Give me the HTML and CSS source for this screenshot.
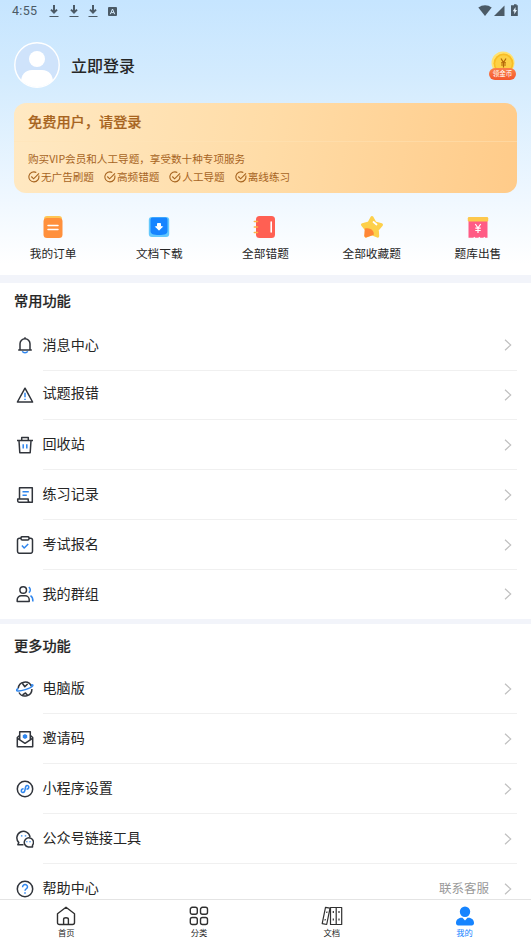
FILE: index.html
```html
<!DOCTYPE html>
<html lang="zh-CN">
<head>
<meta charset="utf-8">
<meta name="viewport" content="width=device-width, initial-scale=1">
<title>我的</title>
<link rel="stylesheet" href="styles.css">
</head>
<body>
<div class="app">
  <main class="content">
  <header class="hero">
    <div class="status">
      <span class="clock">4:55</span>
      <svg class="dl" viewBox="0 0 10 12"><path d="M5 0v7M2 4.600l3 3 3-3" /><path class="thin" d="M.5 11.500h9"/></svg>
      <svg class="dl" viewBox="0 0 10 12"><path d="M5 0v7M2 4.600l3 3 3-3" /><path class="thin" d="M.5 11.500h9"/></svg>
      <svg class="dl" viewBox="0 0 10 12"><path d="M5 0v7M2 4.600l3 3 3-3" /><path class="thin" d="M.5 11.500h9"/></svg>
      <svg class="app-a" viewBox="0 0 9 9"><rect width="9" height="9" rx="1" fill="#4b5a66"/><path d="M2.300 7.200L4.500 2l2.200 5.200M3.200 5.600h2.600" fill="none" stroke="#d5ebfc"/></svg>
      <svg class="signals" viewBox="0 0 42 14"><path d="M.3 3.600C4.200 .3 10 .3 13.700 3.600L7 12z"/><path d="M26.500 1.500v10.500H16z"/><path d="M34.800 1.300h1.200V.2h2.600v1.100h1.200V12h-6.800V1.300z"/><path d="M37.500 3L34.800 7.200h1.500v3L39 6h-1.500z" fill="#e6f3fe"/></svg>
    </div>
    <div class="profile">
      <svg class="avatar" viewBox="0 0 46 46"><defs><clipPath id="face"><circle cx="23" cy="23" r="22"/></clipPath></defs><circle cx="23" cy="23" r="22" fill="#cfe3fb"/><g clip-path="url(#face)" fill="#fff"><circle cx="23" cy="17" r="8"/><path d="M7 40c0-7 4-12 11-12h10c7 0 11 5 11 12v8H7z"/></g><circle cx="23" cy="23" r="22.200" fill="none" stroke="#fff" stroke-width="1.400"/></svg>
      <span class="login">立即登录</span>
      <div class="coin">
        <svg viewBox="0 0 24 22"><circle cx="12" cy="12" r="11.500" fill="#ffe271"/><circle cx="12.500" cy="12.500" r="10" fill="#f8bd25"/><circle cx="12.500" cy="12.500" r="8.300" fill="#fdd044"/><path d="M10 7.500l2.500 4 2.500-4M12.500 11.500v5M10 11.800h5M10 14h5" fill="none" stroke="#b4690a" stroke-width="1.200"/></svg>
        <span class="coin-tag">领金币</span>
      </div>
    </div>
    <section class="vip">
      <h2>免费用户，请登录</h2>
      <div class="vip-info">
        <p>购买VIP会员和人工导题，享受数十种专项服务</p>
        <div class="perks">
          <span class="perk"><svg viewBox="0 0 12 12"><path d="M10.700 4.500A5 5 0 1 1 8.300 1.500"/><path d="M3.300 5.500l2.300 2.300L11 2.300"/></svg>无广告刷题</span>
          <span class="perk"><svg viewBox="0 0 12 12"><path d="M10.700 4.500A5 5 0 1 1 8.300 1.500"/><path d="M3.300 5.500l2.300 2.300L11 2.300"/></svg>高频错题</span>
          <span class="perk"><svg viewBox="0 0 12 12"><path d="M10.700 4.500A5 5 0 1 1 8.300 1.500"/><path d="M3.300 5.500l2.300 2.300L11 2.300"/></svg>人工导题</span>
          <span class="perk"><svg viewBox="0 0 12 12"><path d="M10.700 4.500A5 5 0 1 1 8.300 1.500"/><path d="M3.300 5.500l2.300 2.300L11 2.300"/></svg>离线练习</span>
        </div>
      </div>
    </section>
    <nav class="shortcuts">
      <a><svg viewBox="0 0 24 24"><rect x="3" y="1" width="18" height="10" rx="3" fill="#ffc655"/><rect x="2.500" y="3" width="19" height="20" rx="3.500" fill="#ff903c"/><path d="M7 10.500h10M7 14.500h10" stroke="#fff" stroke-width="1.500" stroke-linecap="round"/></svg>我的订单</a>
      <a><svg viewBox="0 0 24 24"><rect x="1.800" y="2" width="20.400" height="20" rx="3" fill="#63c8fd"/><path d="M5.500 2.500h13a2 2 0 0 1 2 2V16c0 3-3 4-8.500 4s-8.500-1-8.500-4V4.500a2 2 0 0 1 2-2z" fill="#1684ff"/><path d="M10.500 8.500h3v3.200h2L12 15.200l-3.500-3.500h2z" fill="#fff" stroke="#fff" stroke-linejoin="round"/></svg>文档下载</a>
      <a><svg viewBox="0 0 24 24"><rect x="3" y="1" width="19" height="22" rx="3.500" fill="#ff6053"/><path d="M1.300 6.500h3.200M1.300 12h3.200M1.300 17.500h3.200" stroke="#ffb347" stroke-width="1.500" stroke-linecap="round"/><path d="M18.200 7v10" stroke="#fff" stroke-width="1.600" stroke-linecap="round"/></svg>全部错题</a>
      <a><svg viewBox="0 0 24 24"><path d="M12 2.500L15 8l6.500 1.700-4.200 5 .4 6.500L12 18.900l-6 2.300.5-6.500-4-5L9 8z" fill="#fdd04b" stroke="#fdd04b" stroke-width="3" stroke-linejoin="round"/><path d="M4.800 13.600c6.500-1.500 9.500 3 9 6.200L6 22.600q-1.800 0-1.700-2z" fill="#ff8737"/><path d="M13.500 7l3 2.500" stroke="#fff" stroke-width="1.800" stroke-linecap="round"/></svg>全部收藏题</a>
      <a><svg viewBox="0 0 24 24"><path d="M2.500 5h19v17.700h-2.200l-1-1-1 1h-3l-1-1-1 1h-3l-1-1-1 1h-4.800z" fill="#ff5b85"/><rect x="1.800" y="2" width="20.400" height="4.500" rx="1.200" fill="#fdc84d"/><path d="M9.300 9l2.700 4 2.700-4M12 13v5M9.300 13.200h5.400M9.300 15.500h5.400" stroke="#fff" stroke-width="1.200" fill="none"/></svg>题库出售</a>
    </nav>
  </header>

  <section class="group common">
    <h3>常用功能</h3>
    <ul>
      <li><svg class="ico" viewBox="0 0 18 18"><path class="b" d="M6.300 15.200a2.900 2.400 0 0 0 5.400 0"/><path d="M2.200 14h13.600M4 14V7.700a5 5 0 0 1 10 0V14M9 2.700V1.200"/></svg><span>消息中心</span><svg class="arrow" viewBox="0 0 8 12"><path d="M1 .8L6.700 6 1 11.200"/></svg></li>
      <li class="report"><svg class="ico" viewBox="0 0 18 18"><path d="M9 2.200L16.600 16H1.400z"/><path class="b" d="M9 6.800v4.400M9 12.800v1.200"/></svg><span>试题报错</span><svg class="arrow" viewBox="0 0 8 12"><path d="M1 .8L6.700 6 1 11.200"/></svg></li>
      <li><svg class="ico" viewBox="0 0 18 18"><path d="M1 4.500h16M5.700 4.300V1.600h6.600v2.700M3 4.700l.8 12h10.400l.8-12"/><path class="b" d="M7.200 8.300v4.200M10.800 8.300v4.200"/></svg><span>回收站</span><svg class="arrow" viewBox="0 0 8 12"><path d="M1 .8L6.700 6 1 11.200"/></svg></li>
      <li><svg class="ico" viewBox="0 0 18 18"><path d="M3.500 13V1.700h12.800v14.600H3.200a1.600 1.600 0 0 1-1.500-1.700V13h10.500v1.600q0 1.700 1.800 1.700"/><path class="b" d="M6.500 5.700h6.300M6.500 9.200h4.300"/></svg><span>练习记录</span><svg class="arrow" viewBox="0 0 8 12"><path d="M1 .8L6.700 6 1 11.200"/></svg></li>
      <li><svg class="ico" viewBox="0 0 18 18"><rect x="1.500" y="2.300" width="15" height="15" rx="2"/><rect x="5" y=".7" width="8" height="3.300" rx="1.200" fill="#fff"/><path class="b" d="M5.900 9.500l2.300 2.500 4-4"/></svg><span>考试报名</span><svg class="arrow" viewBox="0 0 8 12"><path d="M1 .8L6.700 6 1 11.200"/></svg></li>
      <li><svg class="ico" viewBox="0 0 18 18"><circle cx="7.200" cy="5" r="3.300"/><path d="M1.200 16.500v-1.700a4 4 0 0 1 4-4h4a4 4 0 0 1 4 4v1.700z"/><path class="b" d="M12.800 2.200c2 1.500 2 4 0 5.500M14.500 10.700c2 1.300 2.500 3 2.400 5.800"/></svg><span>我的群组</span><svg class="arrow" viewBox="0 0 8 12"><path d="M1 .8L6.700 6 1 11.200"/></svg></li>
    </ul>
  </section>

  <section class="group more">
    <h3>更多功能</h3>
    <ul>
      <li><svg class="ico" viewBox="0 0 18 18"><path d="M2.200 8.500a6.900 6.900 0 0 1 13.300-2M3 12.500a6.900 6.900 0 0 0 12.900-3.500M6.500 3.500l2.300 3.300L11.600 4M6.500 14.800l3-1.800 1.800 2"/><path class="b" d="M2.300 8.500C.5 9.500 0 10.500 1 10.900c3 .9 14-2.600 15.700-5.100.5-.9-.3-1.200-1.600-.9"/></svg><span>电脑版</span><svg class="arrow" viewBox="0 0 8 12"><path d="M1 .8L6.700 6 1 11.200"/></svg></li>
      <li><svg class="ico" viewBox="0 0 18 18"><path d="M3.800 5.300L1.300 7.500v9.200h15.400V7.500l-2.500-2.200"/><path d="M3.700 9.700V1.700h10.600v8M1.500 8.300l7.500 5 7.500-5"/><path class="dot" d="M9 4l2.200 1.300v2.500L9 9.100 6.800 7.800V5.300z"/></svg><span>邀请码</span><svg class="arrow" viewBox="0 0 8 12"><path d="M1 .8L6.700 6 1 11.200"/></svg></li>
      <li><svg class="ico" viewBox="0 0 18 18"><circle cx="9" cy="9" r="7.700"/><path class="b" d="M7.600 8.800C4.500 9 4.800 12.700 7 12.500c3.500-.3 1-6.700 4-7 2.300-.2 2.600 3.300-.5 3.700"/></svg><span>小程序设置</span><svg class="arrow" viewBox="0 0 8 12"><path d="M1 .8L6.700 6 1 11.200"/></svg></li>
      <li><svg class="ico" viewBox="0 0 18 18"><path d="M7.500 14.800H1.800l1-2.200A6.600 6.600 0 1 1 14 7"/><path d="M16.500 15.200v1.700h-4.300a4.600 4.600 0 1 1 4.300-1.700z"/><path class="b" d="M5.700 5.200v1.400M9.500 5.200v1.400M10.800 11.200v1M14 11.200v1"/></svg><span>公众号链接工具</span><svg class="arrow" viewBox="0 0 8 12"><path d="M1 .8L6.700 6 1 11.200"/></svg></li>
      <li><svg class="ico" viewBox="0 0 18 18"><circle cx="9" cy="9" r="7.700"/><path class="b" d="M6.600 7.200C6.600 3.500 11.600 4 11.500 7c0 1.600-2.500 1.900-2.500 3.800M9 12.300v1.400"/></svg><span>帮助中心</span><em>联系客服</em><svg class="arrow" viewBox="0 0 8 12"><path d="M1 .8L6.700 6 1 11.200"/></svg></li>
    </ul>
  </section>
  </main>

  <nav class="tabs">
    <a><svg viewBox="0 0 20 20"><path d="M3.500 18.500q-2 0-2-2V7.700L10 1.300l8.500 6.400v8.800q0 2-2 2zM7.600 18.300v-5q0-1.600 2.400-1.600t2.400 1.600v5"/></svg>首页</a>
    <a><svg viewBox="0 0 20 20"><rect x="1.300" y="1.300" width="7" height="7" rx="2"/><rect x="11.500" y="1.300" width="7" height="7" rx="2"/><rect x="1.300" y="11.500" width="7" height="7" rx="2"/><rect x="11.500" y="11.500" width="7" height="7" rx="2"/></svg>分类</a>
    <a><svg class="books" viewBox="0 0 22 20"><path d="M4.500 1.300l4.500.8-3.300 16.400-4.500-.8zM9.500 1.500h5.700v17H9.500zM15.200 1.500h5.500v17h-5.500z"/><path d="M6 5.500l-.3 1.500M4.300 13l-.3 1.500M12.300 5v2M12.300 12.500v2M18 5v2M18 12.500v2"/></svg>文档</a>
    <a class="active"><svg viewBox="0 0 20 20"><circle cx="10" cy="5.700" r="5.200"/><path d="M6.500 11.800h1L10 14.500l2.500-2.700h1c3.300 0 5.500 2.300 5.500 5.200 0 1.500-.8 2.500-2.300 2.500H3.300C1.800 19.500 1 18.500 1 17c0-2.900 2.200-5.200 5.500-5.200z"/></svg>我的</a>
  </nav>
</div>
</body>
</html>
```
FILE: styles.css
```css
* { box-sizing: border-box; }
body, h2, h3, p, ul { margin: 0; padding: 0; }
body {
  font-family: "Noto Sans CJK SC", sans-serif;
  color: #262626;
  background: #fff;
}
svg { display: block; flex: none; }
.app {
  display: flex;
  flex-direction: column;
  height: 944px;
  overflow: hidden;
}
.content {
  flex: 1;
  min-height: 0;
  overflow: hidden;
}
.hero {
  height: 275px;
  background: linear-gradient(#c6e5ff 0%, #d3ebfe 28%, #f0f8ff 73%, #fff 96%);
}

/* Status bar */
.status {
  display: flex;
  align-items: center;
  height: 22px;
  padding: 0 12px;
}
.clock {
  width: 37px;
  font: 12.500px/22px Roboto, sans-serif;
  letter-spacing: .3px;
  color: #4b5a66;
}
.dl {
  width: 10px;
  height: 12px;
  margin-right: 9.500px;
  fill: none;
  stroke: #4b5a66;
  stroke-width: 2;
}
.dl .thin { stroke-width: 1; }
.app-a { width: 9px; height: 9px; }
.signals {
  width: 42px;
  height: 14px;
  margin: 0 -1px 0 auto;
  fill: #4b5a66;
}

/* Profile */
.profile {
  display: flex;
  align-items: center;
  height: 46px;
  margin: 20px 14px 0;
}
.avatar { width: 46px; height: 46px; }
.login {
  margin: -1px 0 0 11px;
  font-size: 16px;
  line-height: 24px;
  font-weight: 500;
}
.coin {
  display: flex;
  flex-direction: column;
  align-items: center;
  width: 27px;
  height: 29px;
  margin: 0 1px 0 auto;
}
.coin svg { width: 24px; height: 22px; }
.coin-tag {
  z-index: 1;
  width: 27px;
  height: 12px;
  margin-top: -5px;
  border-radius: 6px;
  background: linear-gradient(#fb8148, #f4572e);
  color: #fff;
  font-size: 6.500px;
  line-height: 11px;
  text-align: center;
}

/* Membership card */
.vip {
  height: 90px;
  margin: 15px 14px 0;
  border-radius: 12px;
  background: linear-gradient(100deg, #ffe9c3, #ffdca7 50%, #ffcb89);
  color: #a7641f;
}
.vip h2 {
  height: 39px;
  padding: 7px 14px 0;
  border-bottom: 1px solid rgba(255, 228, 185, .45);
  font-size: 14.200px;
  line-height: 22px;
  font-weight: 500;
  -webkit-text-stroke: .2px;
}
.vip-info {
  padding: 8px 14px 0;
  font-size: 10.600px;
  line-height: 18px;
}
.perks { display: flex; gap: 10px; }
.perk { display: flex; align-items: center; gap: 1px; }
.perk svg {
  width: 12px;
  height: 12px;
  fill: none;
  stroke: currentColor;
  stroke-width: 1.100;
}

/* Shortcuts */
.shortcuts {
  display: grid;
  grid-template-columns: repeat(5, 1fr);
  margin-top: 22px;
}
.shortcuts a {
  display: flex;
  flex-direction: column;
  align-items: center;
  gap: 5px;
  font-size: 11.700px;
  line-height: 18px;
}
.shortcuts svg { width: 24px; height: 24px; }

/* Menu groups */
.group { border-top: 5px solid #f2f4fa; }
.common { border-top-width: 8px; }
.group h3 {
  height: 37px;
  padding-left: 14px;
  font-size: 14.200px;
  line-height: 35px;
  font-weight: 500;
  -webkit-text-stroke: .2px;
}
.group ul { list-style: none; }
.group li {
  display: flex;
  align-items: center;
  height: 50px;
  padding-left: 16px;
  font-size: 14.100px;
  line-height: 22px;
}
.group li span { margin-top: -4px; }
.more h3 { height: 40px; line-height: 42px; }
.common li:first-child { height: 51px; }
.common .report { height: 49px; }
.group .report span { margin-top: -8px; }
.common li:last-child { height: 49px; }
.ico {
  width: 18px;
  height: 18px;
  margin: -1px 8.500px 0 0;
  fill: none;
  stroke: #30343b;
  stroke-width: 1.500;
  stroke-linejoin: round;
}
.ico .b { stroke: #2f86ee; }
.ico .dot { fill: #2f86ee; stroke: none; }
.group li::after {
  content: "";
  align-self: flex-end;
  width: 474px;
  height: 1px;
  margin: 0 14px 0 -488px;
  background: #f0f0f0;
}
.group li:last-child::after { background: transparent; }
.arrow {
  width: 8px;
  height: 12px;
  margin: -1px 19px 0 auto;
  fill: none;
  stroke: #c0c0c0;
  stroke-width: 1.200;
}
.group em {
  margin: -2px 0 0 auto;
  font-size: 12.500px;
  font-style: normal;
  color: #999;
}
.group em + .arrow { margin-left: 15px; }

/* Bottom tabs */
.tabs {
  flex: none;
  display: grid;
  grid-template-columns: repeat(4, 1fr);
  height: 45px;
  border-top: 1px solid #e4e4e4;
  background: #fff;
}
.tabs a {
  display: flex;
  flex-direction: column;
  align-items: center;
  padding-top: 6px;
  font-size: 8.300px;
  line-height: 12px;
}
.tabs svg {
  width: 20px;
  height: 20px;
  fill: none;
  stroke: #303030;
  stroke-width: 1.400;
  stroke-linejoin: round;
}
.tabs .books { width: 22px; stroke-width: 1.200; }
.tabs .active { color: #1684ff; }
.tabs .active svg { fill: #1684ff; stroke: none; }
```
